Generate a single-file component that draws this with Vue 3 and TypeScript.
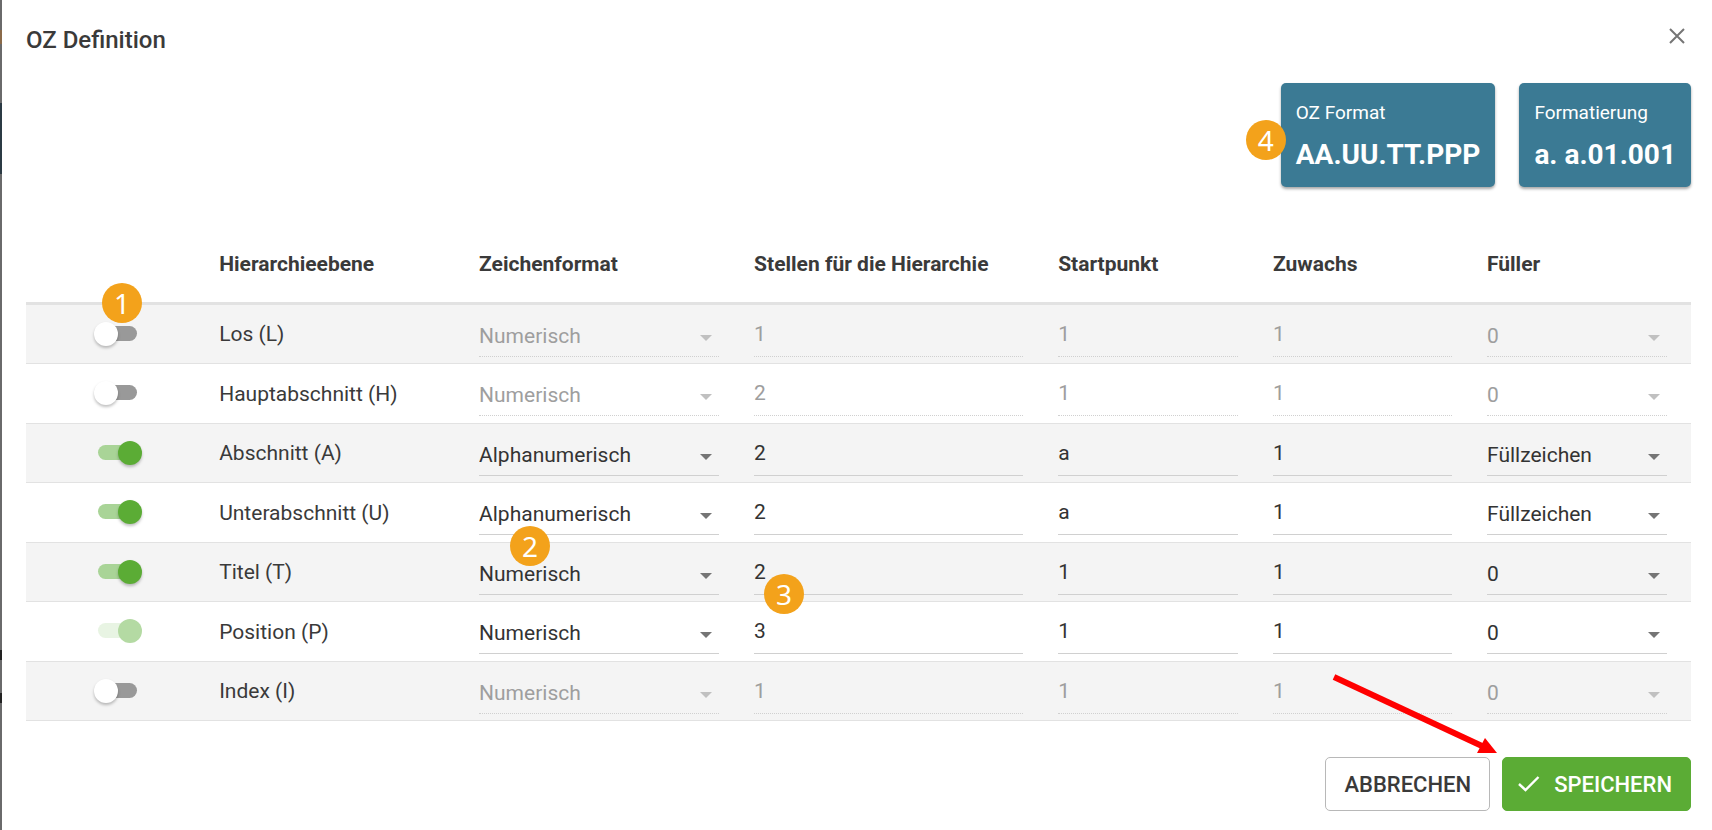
<script setup lang="ts">
import { reactive } from 'vue'

interface Level {
  id: string
  name: string
  active: boolean
  locked?: boolean
  format: string
  digits: string
  start: string
  step: string
  filler: string
}

const levels = reactive<Level[]>([
  { id: 'L', name: 'Los (L)', active: false, format: 'Numerisch', digits: '1', start: '1', step: '1', filler: '0' },
  { id: 'H', name: 'Hauptabschnitt (H)', active: false, format: 'Numerisch', digits: '2', start: '1', step: '1', filler: '0' },
  { id: 'A', name: 'Abschnitt (A)', active: true, format: 'Alphanumerisch', digits: '2', start: 'a', step: '1', filler: 'Füllzeichen' },
  { id: 'U', name: 'Unterabschnitt (U)', active: true, format: 'Alphanumerisch', digits: '2', start: 'a', step: '1', filler: 'Füllzeichen' },
  { id: 'T', name: 'Titel (T)', active: true, format: 'Numerisch', digits: '2', start: '1', step: '1', filler: '0' },
  { id: 'P', name: 'Position (P)', active: true, locked: true, format: 'Numerisch', digits: '3', start: '1', step: '1', filler: '0' },
  { id: 'I', name: 'Index (I)', active: false, format: 'Numerisch', digits: '1', start: '1', step: '1', filler: '0' },
])

const formats = ['Numerisch', 'Alphanumerisch']
const fillers = ['0', 'Füllzeichen']
</script>

<template>
  <div class="page">
    <div class="backdrop"></div>
    <main class="dialog">
      <header class="head">
        <h1>OZ Definition</h1>
        <button class="close" type="button" aria-label="Schließen">
          <svg width="16" height="16" viewBox="0 0 16 16"><path d="M1 1 15 15M15 1 1 15" fill="none" stroke="#757575" stroke-width="2" /></svg>
        </button>
      </header>

      <section class="cards">
        <div class="card">
          <span class="card-label">OZ Format</span>
          <strong>AA.UU.TT.PPP</strong>
          <span class="badge badge-4">4</span>
        </div>
        <div class="card">
          <span class="card-label">Formatierung</span>
          <strong>a. a.01.001</strong>
        </div>
      </section>

      <table>
        <colgroup>
          <col class="c-toggle" /><col class="c-name" /><col class="c-format" /><col class="c-digits" />
          <col class="c-start" /><col class="c-step" /><col class="c-filler" />
        </colgroup>
        <thead>
          <tr>
            <th></th>
            <th scope="col">Hierarchieebene</th>
            <th scope="col">Zeichenformat</th>
            <th scope="col">Stellen für die Hierarchie</th>
            <th scope="col">Startpunkt</th>
            <th scope="col">Zuwachs</th>
            <th scope="col">Füller</th>
          </tr>
        </thead>
        <tbody>
          <tr v-for="l in levels" :key="l.id">
            <td class="toggle-cell">
              <input :id="'level-' + l.id" v-model="l.active" class="toggle" type="checkbox" :disabled="l.locked" />
              <span v-if="l.id === 'L'" class="badge badge-1">1</span>
            </td>
            <td class="name-cell"><label :for="'level-' + l.id">{{ l.name }}</label></td>
            <td>
              <div class="pick">
                <select v-model="l.format" :disabled="!l.active" :aria-label="'Zeichenformat ' + l.name">
                  <option v-for="f in formats" :key="f">{{ f }}</option>
                </select>
                <svg class="caret" width="12" height="6" viewBox="0 0 12 6"><path d="M0 0H12L6 6Z" /></svg>
              </div>
              <span v-if="l.id === 'T'" class="badge badge-2">2</span>
            </td>
            <td>
              <input v-model="l.digits" class="text" type="text" :disabled="!l.active" :aria-label="'Stellen ' + l.name" />
              <span v-if="l.id === 'T'" class="badge badge-3">3</span>
            </td>
            <td><input v-model="l.start" class="text" type="text" :disabled="!l.active" :aria-label="'Startpunkt ' + l.name" /></td>
            <td><input v-model="l.step" class="text" type="text" :disabled="!l.active" :aria-label="'Zuwachs ' + l.name" /></td>
            <td class="last">
              <div class="pick">
                <select v-model="l.filler" :disabled="!l.active" :aria-label="'Füller ' + l.name">
                  <option v-for="f in fillers" :key="f">{{ f }}</option>
                </select>
                <svg class="caret" width="12" height="6" viewBox="0 0 12 6"><path d="M0 0H12L6 6Z" /></svg>
              </div>
            </td>
          </tr>
        </tbody>
      </table>

      <footer class="actions">
        <button class="btn" type="button">ABBRECHEN</button>
        <button class="btn primary" type="button">
          <svg width="22" height="16" viewBox="0 0 22 16"><path d="M1 8 7.500 14 20.500 1" fill="none" stroke="#fff" stroke-width="2.400" /></svg>
          SPEICHERN
        </button>
        <svg class="arrow" width="166" height="84" viewBox="0 0 166 84">
          <path d="M2 5 150 74" stroke="#f00" stroke-width="6" />
          <path d="M153 66 165 81 145 81Z" fill="#f00" />
        </svg>
      </footer>
    </main>
  </div>
</template>

<style>
body {
  background: #fff;
}
</style>

<style scoped>
* {
  box-sizing: border-box;
}

.page {
  display: flex;
  min-height: 100vh;
  font-family: Roboto, "Liberation Sans", sans-serif;
  font-size: 21px;
  color: #3a3a3a;
}

.backdrop {
  flex: none;
  width: 2px;
  background: linear-gradient(
    #6a6a6b 0 30px, #8a6a4a 30px 44px, #6a6a6b 44px 103px, #2b3a44 103px 174px,
    #6a6a6b 174px 650px, #222 650px 660px, #6a6a6b 660px 693px, #222 693px 703px, #6a6a6b 703px
  );
}

.dialog {
  flex: 1;
  min-width: 0;
  padding: 20px 21px 19px 24px;
}

.head {
  display: flex;
  justify-content: space-between;
  height: 63px;
}

h1 {
  margin: 0;
  font-size: 24px;
  font-weight: 500;
  line-height: 40px;
}

button {
  font: inherit;
  color: inherit;
  cursor: pointer;
}

.close {
  display: flex;
  align-items: center;
  justify-content: center;
  width: 28px;
  height: 32px;
  padding: 0;
  border: 0;
  background: none;
}

.cards {
  display: flex;
  justify-content: flex-end;
  gap: 24px;
}

.card {
  position: relative;
  display: flex;
  flex-direction: column;
  gap: 12px;
  height: 104px;
  padding: 16px 15px;
  border-radius: 5px;
  background: #3b7a94;
  box-shadow: 0 2px 3px rgba(0, 0, 0, 0.35);
  color: #fff;
}

.card-label {
  font-size: 19px;
  line-height: 28px;
}

.card strong {
  font-size: 28px;
  font-weight: 700;
  line-height: 32px;
}

.badge {
  position: absolute;
  z-index: 1;
  width: 40px;
  height: 40px;
  border-radius: 50%;
  background: #f3a21b;
  color: #fff;
  font-family: "Noto Sans", "Open Sans", sans-serif;
  font-size: 28px;
  line-height: 40px;
  text-align: center;
}

.badge-1 { left: 76px; top: -22px; }
.badge-2 { left: 49px; top: -17px; }
.badge-3 { left: 28px; top: 31px; }
.badge-4 { left: -35px; top: 37px; }

table {
  width: 100%;
  margin-top: 39px;
  border-spacing: 0;
  table-layout: fixed;
}

.c-toggle { width: 10.52%; }
.c-name { width: 15.61%; }
.c-format { width: 16.52%; }
.c-digits { width: 18.26%; }
.c-start { width: 12.91%; }
.c-step { width: 12.85%; }
.c-filler { width: 13.33%; }

th {
  height: 79px;
  padding: 0 17px 0 18px;
  border-bottom: 3px solid #e2e2e2;
  text-align: left;
  font-weight: 700;
  white-space: nowrap;
}

td {
  position: relative;
  height: 59px;
  padding: 0 17px 0 18px;
  border-bottom: 1px solid #e2e2e2;
  vertical-align: top;
}

tr:nth-child(even) td {
  height: 60px;
}

tbody tr:nth-child(odd) {
  background: #f4f4f4;
}

td.last {
  padding-right: 24px;
}

td.toggle-cell {
  padding-top: 17px;
  padding-left: 68px;
}

td.name-cell {
  vertical-align: middle;
}

.toggle {
  display: block;
  appearance: none;
  position: relative;
  width: 48px;
  height: 24px;
  margin: 0;
  cursor: pointer;
}

.toggle::before {
  content: "";
  position: absolute;
  left: 4px;
  top: 4px;
  width: 39px;
  height: 15px;
  border-radius: 8px;
  background: #999;
}

.toggle::after {
  content: "";
  position: absolute;
  left: 0;
  top: 0;
  width: 24px;
  height: 24px;
  border-radius: 50%;
  background: #fff;
  box-shadow: 0 2px 3px rgba(0, 0, 0, 0.25);
}

.toggle:checked::before {
  background: #a9d497;
}

.toggle:checked::after {
  left: 24px;
  background: #5bac35;
}

.toggle:disabled::before {
  background: #e8f4e3;
}

.toggle:disabled::after {
  background: #b4daa3;
  box-shadow: none;
}

.text,
select {
  display: block;
  width: 100%;
  height: 52px;
  margin: 0;
  border: 0;
  border-bottom: 1px solid #d0d0d0;
  border-radius: 0;
  outline: 0;
  background: none;
  font: inherit;
  color: #333;
  opacity: 1;
}

.text {
  padding: 6px 0 0;
}

select {
  appearance: none;
  padding: 11px 24px 0 0;
}

.text:disabled,
select:disabled {
  border-bottom-style: dotted;
  color: #9e9e9e;
}

.pick {
  position: relative;
}

.caret {
  position: absolute;
  right: 7px;
  top: 30px;
  fill: #757575;
  pointer-events: none;
}

select:disabled + .caret {
  fill: #c0c0c0;
}

.actions {
  position: relative;
  display: flex;
  justify-content: flex-end;
  gap: 12px;
  margin-top: 36px;
}

.btn {
  display: flex;
  align-items: center;
  gap: 14px;
  height: 54px;
  padding: 0 18px;
  border: 1px solid #b8b8b8;
  border-radius: 5px;
  background: #fff;
  font-size: 22px;
  font-weight: 500;
}

.primary {
  padding-left: 15px;
  border-color: #5bac35;
  background: #5bac35;
  color: #fff;
}

.arrow {
  position: absolute;
  right: 193px;
  top: -85px;
  pointer-events: none;
}
</style>
